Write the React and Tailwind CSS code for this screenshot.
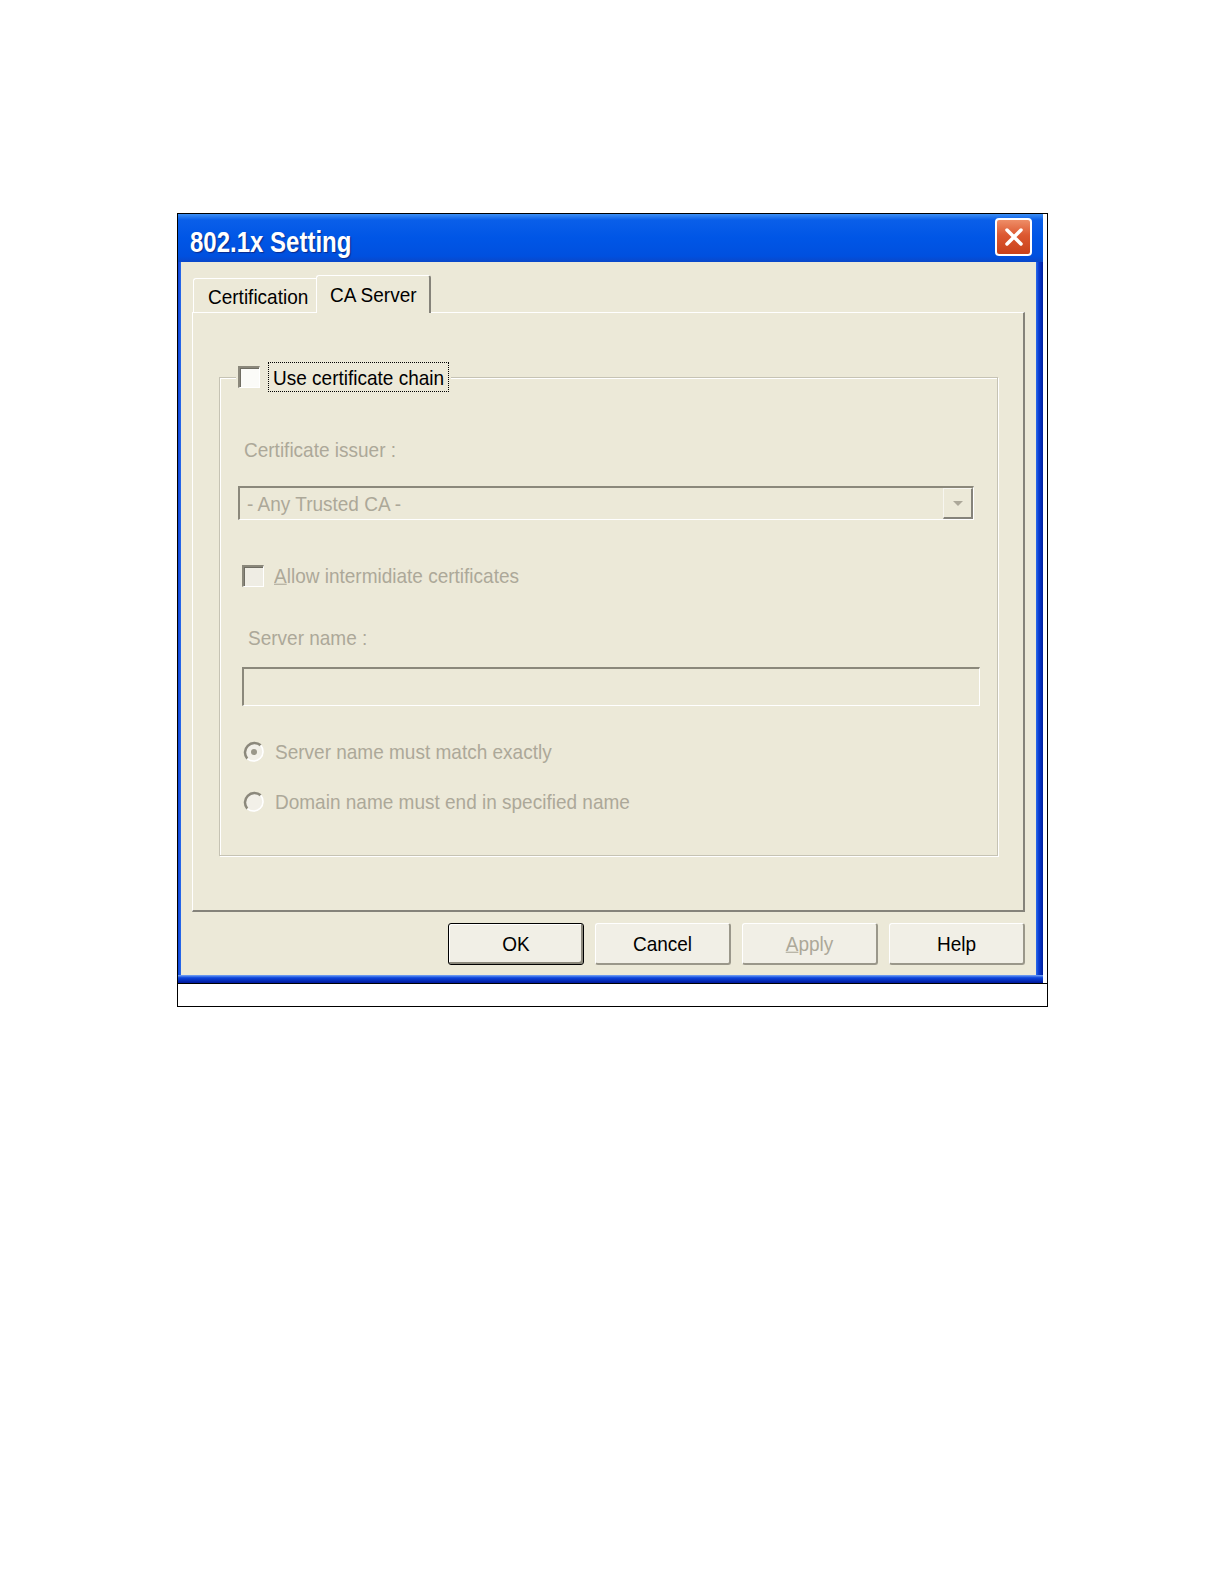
import React from 'react';

function T({ children, className = '' }) {
  return <span className={`inline-block whitespace-nowrap leading-[22px] scale-y-110 ${className}`}>{children}</span>;
}

function CheckBox({ disabled }) {
  return (
    <div
      className={`w-[22px] h-[22px] shrink-0 border-t-2 border-l-2 border-[#8b887b] border-b border-r border-b-white border-r-white shadow-[inset_1px_1px_0_#6f6d63] ${
        disabled ? 'bg-[#efede4]' : 'bg-[#fbfbf8]'
      }`}
    />
  );
}

function Radio({ checked }) {
  return (
    <svg width="22" height="22" viewBox="0 0 22 22" className="shrink-0">
      <circle cx="11" cy="11" r="9.5" fill="#f2f0e8" />
      <path d="M4.3 17.7 A9.5 9.5 0 0 1 17.7 4.3" stroke="#8b887b" strokeWidth="2.5" fill="none" />
      <path d="M17.7 4.3 A9.5 9.5 0 0 1 4.3 17.7" stroke="#ffffff" strokeWidth="1.5" fill="none" />
      {checked && <circle cx="11" cy="11" r="3" fill="#9a978a" />}
    </svg>
  );
}

function Button({ children, primary, disabled }) {
  return (
    <div
      className={
        primary
          ? 'w-[136px] h-[42px] rounded-[3px] border border-black bg-[#f1efe6] shadow-[inset_-2px_-2px_0_#8b887b,inset_1px_1px_0_#ffffff] flex items-center justify-center text-black'
          : `w-[136px] h-[42px] rounded-[3px] border-t border-l border-white border-r-2 border-b-2 border-r-[#9a978a] border-b-[#9a978a] bg-[#f1efe6] flex items-center justify-center ${
              disabled ? 'text-[#aca899]' : 'text-black'
            }`
      }
    >
      <T>{children}</T>
    </div>
  );
}

function Window() {
  return (
    <div className="w-[865px] h-full flex flex-col">
      {/* title bar */}
      <div className="h-[48px] shrink-0 flex items-start pl-[12px] bg-[linear-gradient(to_bottom,#3c8ef3_0%,#0a5fe9_12%,#0056e6_50%,#0050df_88%,#0a47c9_100%)]">
        <span className="inline-block mt-[13px] leading-[30px] text-[24px] font-bold text-white scale-y-125 [text-shadow:1px_1px_1px_#0b2a8a]">
          802.1x Setting
        </span>
        <div className="ml-auto mr-[11px] mt-[4px] w-[37px] h-[38px] rounded-[4px] border-2 border-white bg-[linear-gradient(to_bottom,#ee8d67,#dc5830_45%,#c9411b)] flex items-center justify-center">
          <svg width="22" height="22" viewBox="0 0 22 22">
            <path d="M4 4L18 18M18 4L4 18" stroke="white" strokeWidth="3.5" strokeLinecap="round" />
          </svg>
        </div>
      </div>

      <div className="flex-1 flex">
        <div className="w-[3px] bg-[linear-gradient(to_right,#0a3fd6,#2a6ceb)]" />
        <div className="flex-1 bg-[#ece9d8] px-[11px] pt-[13px] flex flex-col">
          {/* tabs */}
          <div className="h-[37px] flex items-end">
            <div className="ml-[1px] w-[123px] h-[34px] border-t border-l border-white rounded-tl-[3px] pl-[14px] pt-[4px] text-black">
              <T>Certification</T>
            </div>
            <div className="relative z-10 -mb-px w-[115px] h-[38px] bg-[#ece9d8] border-t border-l border-white border-r-2 border-r-[#85837a] rounded-t-[3px] pl-[13px] pt-[5px] text-black">
              <T>CA Server</T>
            </div>
          </div>

          {/* panel */}
          <div className="h-[600px] border-t border-l border-white border-r-2 border-b-2 border-r-[#85837a] border-b-[#85837a] pl-[26px] pt-[64px]">
            <div className="relative w-[779px] h-[479px] border border-[#c6c3b4] shadow-[1px_1px_0_#ffffff,inset_1px_1px_0_#ffffff] flex flex-col items-start">
              <div className="absolute left-[16px] -top-[16px] flex items-center bg-[#ece9d8] px-[2px]">
                <CheckBox />
                <div className="ml-[8px] w-[181px] h-[30px] border border-dotted border-black pl-[4px] pt-[1px] overflow-hidden text-black">
                  <T>Use certificate chain</T>
                </div>
              </div>

              <T className="mt-[61px] ml-[24px] text-[#aca899]">Certificate issuer :</T>

              <div className="mt-[25px] ml-[18px] w-[736px] h-[34px] flex border-t-2 border-l-2 border-[#8b887b] border-b border-r border-b-white border-r-white">
                <div className="flex-1 flex items-center pl-[7px] text-[#aca899]">
                  <T>- Any Trusted CA -</T>
                </div>
                <div className="w-[30px] h-full border-t border-l border-[#f7f6f0] border-b-2 border-r-2 border-b-[#85837a] border-r-[#85837a] flex items-center justify-center">
                  <svg width="12" height="7" viewBox="0 0 12 7">
                    <path d="M1 1h10L6 6z" fill="#aca899" />
                  </svg>
                </div>
              </div>

              <div className="mt-[44px] ml-[22px] h-[23px] flex items-center">
                <CheckBox disabled />
                <T className="ml-[10px] text-[#aca899]">
                  <span className="underline">A</span>llow intermidiate certificates
                </T>
              </div>

              <T className="mt-[40px] ml-[28px] text-[#aca899]">Server name :</T>

              <div className="mt-[18px] ml-[22px] w-[738px] h-[39px] border-t-2 border-l-2 border-[#8b887b] border-b border-r border-b-white border-r-white" />

              <div className="mt-[35px] ml-[23px] h-[22px] flex items-center">
                <Radio checked />
                <T className="ml-[10px] text-[#aca899]">Server name must match exactly</T>
              </div>

              <div className="mt-[28px] ml-[23px] h-[22px] flex items-center">
                <Radio />
                <T className="ml-[10px] text-[#aca899]">Domain name must end in specified name</T>
              </div>
            </div>
          </div>

          {/* buttons */}
          <div className="mt-[11px] flex justify-end gap-[11px]">
            <Button primary>OK</Button>
            <Button>Cancel</Button>
            <Button disabled>
              <span className="underline">A</span>pply
            </Button>
            <Button>Help</Button>
          </div>
        </div>
        <div className="w-[7px] bg-[linear-gradient(to_right,#2a6ceb,#0a3bd2_40%,#001f9e)]" />
      </div>
      <div className="h-[8px] shrink-0 bg-[linear-gradient(to_bottom,#7aa7f4,#0b45dc_35%,#00179a)]" />
    </div>
  );
}

export default function App() {
  return (
    <div className="w-[1225px] h-[1585px] bg-white pt-[213px] pl-[177px] font-['Liberation_Sans',Arial,sans-serif] text-[19px]">
      <div className="w-[871px] border border-black bg-white">
        <div className="h-[769px] flex">
          <Window />
        </div>
        <div className="h-[23px] border-t border-black" />
      </div>
    </div>
  );
}
